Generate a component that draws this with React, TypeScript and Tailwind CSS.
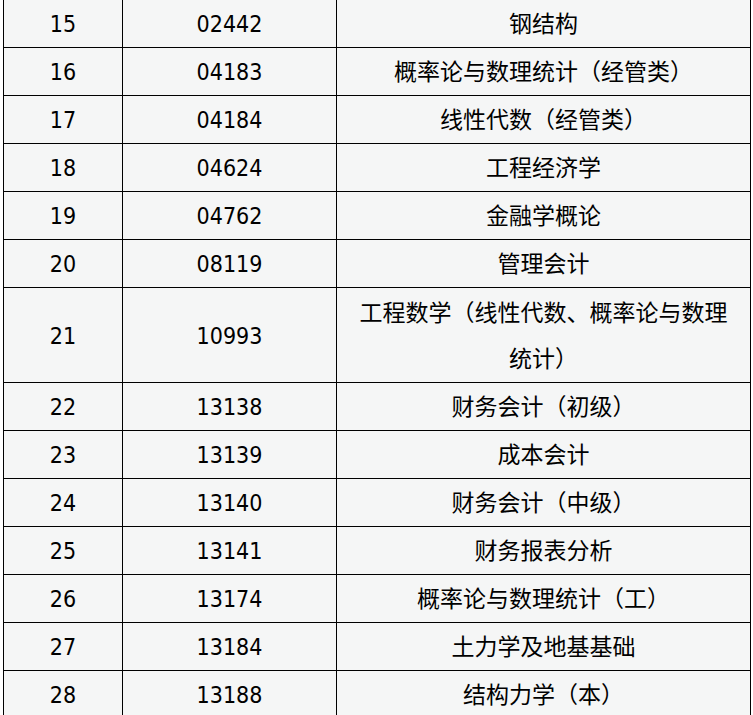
import React from "react";

const rows: [string, string, React.ReactNode, boolean?][] = [
  ["15", "02442", "钢结构"],
  ["16", "04183", "概率论与数理统计（经管类）"],
  ["17", "04184", "线性代数（经管类）"],
  ["18", "04624", "工程经济学"],
  ["19", "04762", "金融学概论"],
  ["20", "08119", "管理会计"],
  [
    "21",
    "10993",
    (
      <>
        工程数学（线性代数、概率论与数理
        <br />
        统计）
      </>
    ),
    true,
  ],
  ["22", "13138", "财务会计（初级）"],
  ["23", "13139", "成本会计"],
  ["24", "13140", "财务会计（中级）"],
  ["25", "13141", "财务报表分析"],
  ["26", "13174", "概率论与数理统计（工）"],
  ["27", "13184", "土力学及地基基础"],
  ["28", "13188", "结构力学（本）"],
];

export default function App() {
  return (
    <div
      className="w-[753px] h-[715px] overflow-hidden bg-white text-black text-[23px]"
      style={{ fontFamily: '"DejaVu Sans Condensed", "Noto Sans CJK SC", sans-serif' }}
    >
      <div className="ml-[3px] w-[748px] border-l border-black bg-[#f5f6f6]">
        {rows.map(([no, code, name, dbl]) => (
          <div
            key={no}
            className={`flex border-b border-black ${dbl ? "h-[95px]" : "h-[48px]"}`}
          >
            <div className="w-[119px] border-r border-black flex items-center justify-center pt-[2px]">
              {no}
            </div>
            <div className="w-[214px] border-r border-black flex items-center justify-center pt-[2px]">
              {code}
            </div>
            <div
              className={`w-[414px] border-r border-black flex items-center justify-center text-center px-[15px] pt-[2px] ${
                dbl ? "leading-[46px]" : ""
              }`}
            >
              <div>{name}</div>
            </div>
          </div>
        ))}
      </div>
    </div>
  );
}
